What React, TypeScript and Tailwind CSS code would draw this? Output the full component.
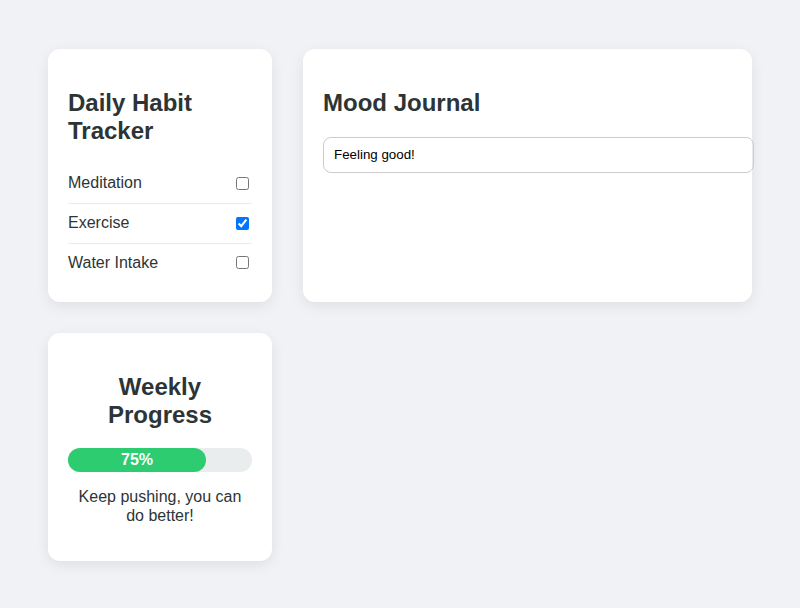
import React from "react";

export default function App() {
  const habits = [
    { name: "Meditation", done: false },
    { name: "Exercise", done: true },
    { name: "Water Intake", done: false },
  ];
  return (
    <div
      className="min-h-[608px] w-full bg-[#f0f2f5] pl-12 pt-[49px] text-[#2d3436]"
      style={{ fontFamily: '"Liberation Sans", Arial, Helvetica, sans-serif' }}
    >
      <div className="grid grid-cols-[224px_449px] gap-[31px] items-stretch">
        <div className="rounded-xl bg-white p-5 shadow-[0_4px_14px_rgba(0,0,0,0.08)]">
          <h2 className="my-[19.92px] text-2xl leading-[27.6px] font-bold">Daily Habit Tracker</h2>
          <ul>
            {habits.map((h, i) => (
              <li
                key={h.name}
                className={`flex items-center justify-between py-[10px] text-base leading-[18.8px] ${i < habits.length - 1 ? "border-b border-[#eaeaea]" : ""}`}
              >
                <span>{h.name}</span>
                <input type="checkbox" defaultChecked={h.done} className="mx-[3px] my-0 h-[13px] w-[13px]" />
              </li>
            ))}
          </ul>
        </div>
        <div className="rounded-xl bg-white p-5 shadow-[0_4px_14px_rgba(0,0,0,0.08)]">
          <h2 className="my-[19.92px] text-2xl leading-[27.6px] font-bold">Mood Journal</h2>
          <input
            type="text"
            defaultValue="Feeling good!"
            className="mt-px box-content w-full rounded-lg border border-[#ccc] px-[10px] py-[10px] text-[13.33px] leading-[14px] text-black outline-none"
            style={{ fontFamily: 'Arial, "Liberation Sans", sans-serif' }}
          />
        </div>
        <div className="rounded-xl bg-white p-5 text-center shadow-[0_4px_14px_rgba(0,0,0,0.08)]">
          <h2 className="my-[19.92px] text-2xl leading-[27.6px] font-bold">Weekly Progress</h2>
          <div className="h-6 w-full rounded-full bg-[#e9eded]">
            <div
              className="flex h-full items-center justify-center rounded-full bg-[#2ecc71] text-base font-bold text-white"
              style={{ width: "75%" }}
            >
              75%
            </div>
          </div>
          <p className="my-4 text-base leading-[18.4px]">Keep pushing, you can do better!</p>
        </div>
      </div>
    </div>
  );
}
